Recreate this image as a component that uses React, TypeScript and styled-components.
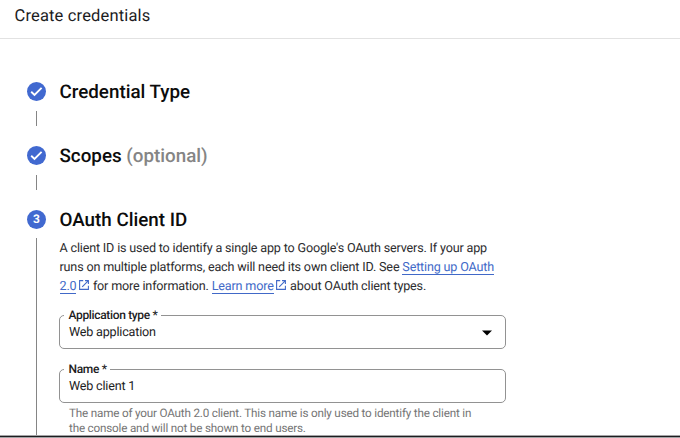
import React from "react";
import styled, { createGlobalStyle } from "styled-components";

const GlobalStyle = createGlobalStyle`
  * { box-sizing: border-box; }
  html, body { margin: 0; padding: 0; background: #fff; overflow: hidden; }
`;

const Page = styled.div`
  width: 680px;
  height: 438px;
  display: flex;
  flex-direction: column;
  overflow: hidden;
  background: #fff;
  font-family: Roboto, sans-serif;
  text-rendering: geometricPrecision;
  color: #1c1c1e;
`;

const Header = styled.header`
  flex: none;
  height: 39px;
  padding: 6px 0 0 14.5px;
  border-bottom: 1px solid #e2e2e2;
  font-size: 16.5px;
  line-height: 21px;
  letter-spacing: 0.16px;
`;

const Stepper = styled.main`
  flex: 1;
  min-height: 0;
  display: flex;
  flex-direction: column;
  overflow: hidden;
  padding: 38px 0 0 27px;
`;

const BottomEdge = styled.footer`
  flex: none;
  height: 3px;
  border: 1px solid #a3a3a5;
  border-width: 1px 0;
  background: #1d1d1f;
`;

const Step = styled.section<{ $open?: boolean }>`
  flex: none;
  display: grid;
  grid-template-columns: 20px 447px;
  column-gap: 12px;
  height: ${(p) => (p.$open ? "231px" : "64px")};
`;

const Rail = styled.div<{ $open?: boolean }>`
  display: flex;
  flex-direction: column;
  align-items: center;
  padding-top: 5px;
  &::after {
    content: "";
    width: 1px;
    margin: ${(p) => (p.$open ? "9px 1px 0 0" : "10px 1px 0 0")};
    height: ${(p) => (p.$open ? "auto" : "15px")};
    flex: ${(p) => (p.$open ? "1" : "none")};
    background: #858585;
  }
`;

const Badge = styled.div`
  width: 19px;
  height: 19px;
  margin-right: 1px;
  border-radius: 50%;
  background: #4169d0;
  color: #fff;
  display: flex;
  align-items: center;
  justify-content: center;
  font-size: 12px;
  font-weight: 700;
  line-height: 19px;
`;

const StepTitle = styled.h2`
  margin: 0;
  padding-left: 0.5px;
  font-size: 18.8px;
  font-weight: 500;
  line-height: 30px;
  height: 28px;
  color: #0c0c0c;
  white-space: nowrap;
`;

const Optional = styled.span`
  color: #858585;
`;

const Description = styled.p`
  margin: 6px 0 0;
  padding-left: 0.5px;
  font-size: 12.6px;
  line-height: 19px;
  letter-spacing: -0.175px;
  color: #2c2c2e;
  white-space: nowrap;
`;

const Link = styled.a`
  display: inline-block;
  line-height: 13px;
  color: #4169c8;
  border-bottom: 1px solid #4169c8;
  text-decoration: none;
`;

const LinkIcon = styled.svg`
  width: 10px;
  height: 10px;
  margin: 0 1px 0 2.5px;
  color: #4169c8;
`;

const Field = styled.fieldset<{ $gap: number }>`
  display: flex;
  align-items: center;
  justify-content: space-between;
  min-width: 0;
  height: 40px;
  margin: ${(p) => p.$gap}px 0 0;
  padding: 0 13px 5px 9px;
  border: 1px solid #929292;
  border-radius: 5px;
  font-size: 12.6px;
  line-height: 16px;
  letter-spacing: -0.2px;
`;

const FieldLabel = styled.legend`
  margin-left: -5px;
  padding: 0 3.5px 0 4.5px;
  font-size: 12px;
  font-weight: 500;
  line-height: 13px;
  letter-spacing: -0.34px;
`;

const Hint = styled.p`
  margin: 3px 0 0 10px;
  font-size: 11.7px;
  line-height: 15px;
  letter-spacing: -0.19px;
  color: #757575;
  white-space: nowrap;
`;

const Check = () => (
  <svg width="19" height="19" viewBox="0 0 19 19" fill="none">
    <path d="M4.2 9.7 7.5 12.9 14.6 5.8" stroke="#fff" strokeWidth="1.9" />
  </svg>
);

const External = () => (
  <LinkIcon viewBox="0 0 10 10" fill="none" stroke="currentColor" strokeWidth="1.1">
    <path d="M4.2.6H.6v8.8h8.8V5.8M6 .6h3.4V4M9.2.8 3.2 6.8" />
  </LinkIcon>
);

const Arrow = () => (
  <svg width="10" height="6" viewBox="0 0 10 6">
    <path d="M0 .5h10L5 5.5Z" fill="#000" />
  </svg>
);

export default function App() {
  return (
    <>
      <GlobalStyle />
      <Page>
        <Header>Create credentials</Header>
        <Stepper>
          <Step>
            <Rail><Badge><Check /></Badge></Rail>
            <StepTitle>Credential Type</StepTitle>
          </Step>
          <Step>
            <Rail><Badge><Check /></Badge></Rail>
            <StepTitle>Scopes <Optional>(optional)</Optional></StepTitle>
          </Step>
          <Step $open>
            <Rail $open><Badge>3</Badge></Rail>
            <div>
              <StepTitle>OAuth Client ID</StepTitle>
              <Description>
                A client ID is used to identify a single app to Google's OAuth servers. If your app<br />
                runs on multiple platforms, each will need its own client ID. See <Link>Setting up OAuth</Link><br />
                <Link>2.0</Link><External /> for more information. <Link>Learn more</Link><External /> about OAuth client types.
              </Description>
              <Field $gap={13}>
                <FieldLabel>Application type *</FieldLabel>
                <span>Web application</span>
                <Arrow />
              </Field>
              <Field $gap={14}>
                <FieldLabel>Name *</FieldLabel>
                <span>Web client 1</span>
              </Field>
              <Hint>
                The name of your OAuth 2.0 client. This name is only used to identify the client in<br />
                the console and will not be shown to end users.
              </Hint>
            </div>
          </Step>
        </Stepper>
        <BottomEdge />
      </Page>
    </>
  );
}
